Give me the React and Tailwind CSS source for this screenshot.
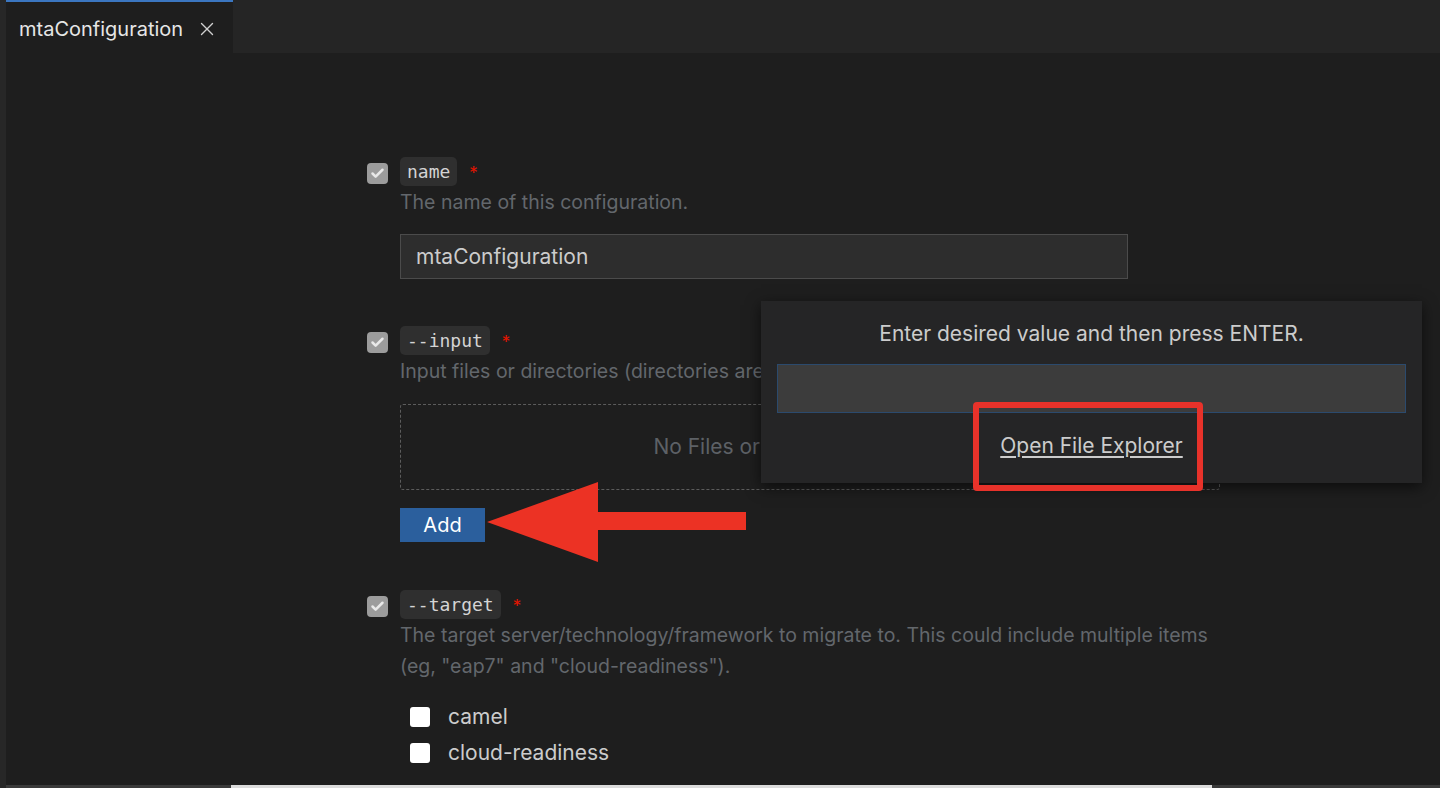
import { X, Check } from "lucide-react";

const sans = "font-['Inter','Open_Sans',sans-serif]";
const mono = "font-['DejaVu_Sans_Mono','Liberation_Mono',monospace]";

function GreyCheck() {
  return (
    <div className="mt-[6px] grid h-[21px] w-[21px] flex-none place-items-center rounded-[4px] bg-[#9c9c9c]">
      <Check className="h-[15px] w-[15px] text-[#e8e8e8]" strokeWidth={4} />
    </div>
  );
}

function OptionHeader({ label }) {
  return (
    <div className="flex h-[29px] items-center">
      <span className={`${mono} rounded-[5px] bg-[#2f2f2f] px-[7px] text-[18px] leading-[29px] text-[#d4d4d4]`}>{label}</span>
      <span className="ml-[12px] mt-[3px] text-[17px] leading-[17px] text-[#e51400]">*</span>
    </div>
  );
}

function Section({ label, children }) {
  return (
    <div className="flex">
      <div className="w-[33px] flex-none">
        <GreyCheck />
      </div>
      <div className="flex-1">
        <OptionHeader label={label} />
        {children}
      </div>
    </div>
  );
}

function WhiteBox({ label }) {
  return (
    <div className="flex h-[36px] items-center">
      <div className="ml-[10px] h-[20px] w-[20px] rounded-[3px] bg-white" />
      <span className="ml-[18px] text-[21px] text-[#cccccc]">{label}</span>
    </div>
  );
}

export default function App() {
  return (
    <div className={`${sans} relative flex h-[788px] w-full overflow-hidden bg-[#1e1e1e]`}>
      <div className="w-[6px] flex-none bg-[#272727]" />
      <div className="flex flex-1 flex-col">
        <div className="flex h-[53px] flex-none bg-[#252525]">
          <div className="flex w-[227px] items-center border-t-2 border-[#3b76c0] bg-[#1e1e1e] pl-[13px] pt-[2px]">
            <span className="text-[20px] text-[#e6e6e6]">mtaConfiguration</span>
            <X className="ml-[13px] h-[22px] w-[22px] text-[#d0d0d0]" strokeWidth={1.5} />
          </div>
        </div>

        <div className="flex-1 pl-[361px] pt-[104px]">
          <Section label="name">
            <p className="mt-[1px] text-[19.5px] leading-[31px] text-[#63676c]">The name of this configuration.</p>
            <div className="mt-[16px] flex h-[45px] w-[728px] items-center border border-[#4b4b4b] bg-[#2d2d2d] pl-[15px] text-[21px] text-[#cccccc]">
              mtaConfiguration
            </div>
          </Section>

          <div className="mt-[47px]">
            <Section label="--input">
              <p className="mt-[1px] text-[19.5px] leading-[31px] text-[#63676c]">
                Input files or directories (directories are scanned recursively for applications).
              </p>
              <div className="mt-[17px] grid h-[86px] w-[820px] place-items-center rounded-[3px] border border-dashed border-[#5c5c5c] text-[21px] text-[#5d6166]">
                No Files or Directories Selected
              </div>
              <button className="mt-[18px] h-[34px] w-[85px] bg-[#2b5f9d] text-[20px] text-white">Add</button>
            </Section>
          </div>

          <div className="mt-[48px]">
            <Section label="--target">
              <p className="mt-[1px] w-[825px] text-[19.5px] leading-[31px] text-[#63676c]">
                The target server/technology/framework to migrate to. This could include multiple items (eg, "eap7" and "cloud-readiness").
              </p>
              <div className="mt-[17px]">
                <WhiteBox label="camel" />
                <WhiteBox label="cloud-readiness" />
              </div>
            </Section>
          </div>
        </div>

        <div className="flex h-[3px] flex-none">
          <div className="w-[225px] bg-[#3a3a3a]" />
          <div className="w-[981px] bg-[#dcdcdc]" />
          <div className="flex-1 bg-[#3a3a3a]" />
        </div>
      </div>

      {/* quick input popup */}
      <div className="absolute left-[761px] top-[301px] flex h-[182px] w-[661px] flex-col items-center bg-[#252526] shadow-[0_4px_14px_rgba(0,0,0,0.6)]">
        <p className="mt-[20px] text-[21px] leading-[26px] text-[#cccccc]">Enter desired value and then press ENTER.</p>
        <div className="mt-[17px] h-[49px] w-[629px] border border-[#2b4a6d] bg-[#3c3c3c]" />
        <a className="mt-[20px] text-[21px] leading-[26px] text-[#cccccc] underline underline-offset-[3px]">Open File Explorer</a>
      </div>

      {/* annotation: red box */}
      <div className="absolute left-[973px] top-[402px] h-[89px] w-[230px] rounded-[4px] border-[6px] border-[#e8322a]" />

      {/* annotation: red arrow */}
      <svg className="absolute left-[485px] top-[480px]" width="264" height="84" viewBox="0 0 264 84">
        <polygon points="2,42 113,2 113,32 261,32 261,50 113,50 113,82" fill="#ec3224" />
      </svg>
    </div>
  );
}
